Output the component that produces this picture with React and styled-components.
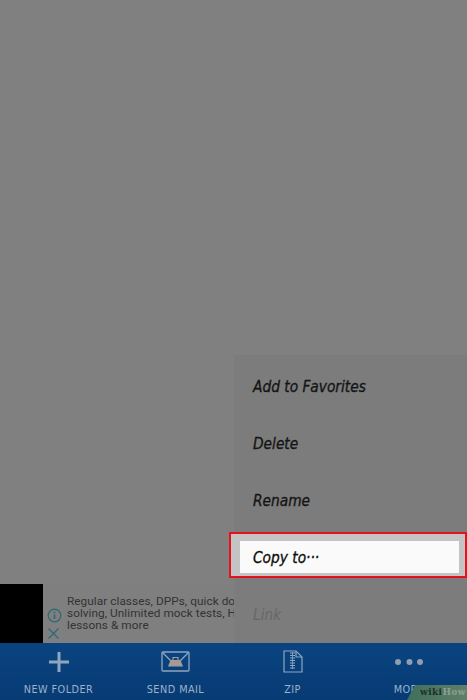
import React from 'react';
import styled, { createGlobalStyle } from 'styled-components';

const Global = createGlobalStyle`
  html, body { margin: 0; padding: 0; background: #7f7f7f; }
  * { box-sizing: border-box; }
`;

const Screen = styled.div`
  position: relative;
  width: 467px;
  height: 700px;
  overflow: hidden;
  display: flex;
  flex-direction: column;
  background: #808080;
  font-family: "Lato", "Liberation Sans", sans-serif;
`;

const Canvas = styled.div`
  flex: 1;
`;

const AdBanner = styled.div`
  height: 59px;
  display: flex;
  background: #7f7f7f;
`;

const AdThumb = styled.div`
  width: 43px;
  background: #000;
`;

const AdControls = styled.div`
  width: 24px;
  padding: 24px 0 0 4px;
  display: flex;
  flex-direction: column;
  align-items: flex-start;
  gap: 4px;
  color: #2f6a75;
`;

const AdText = styled.div`
  width: 167px;
  padding-top: 11px;
  font: 11.8px/12px "Roboto", "Liberation Sans", sans-serif;
  letter-spacing: 0.05px;
  color: #333;
  white-space: nowrap;
  overflow: hidden;
`;

const BottomBar = styled.nav`
  height: 57px;
  display: grid;
  grid-template-columns: 117px 117px 117px 116px;
  background: linear-gradient(#0a4480, #073b74);
`;

const BarButton = styled.div`
  display: flex;
  flex-direction: column;
  align-items: center;
  padding-top: 6px;
  color: #8fa6bf;
`;

const BarIcon = styled.div`
  height: 25px;
  display: flex;
  align-items: center;
  justify-content: center;
`;

const BarLabel = styled.span`
  margin-top: 9px;
  font: 10.8px/13px "DejaVu Sans", sans-serif;
  font-stretch: condensed;
  letter-spacing: 0.45px;
  color: #9db2c9;
  white-space: nowrap;
`;

const Menu = styled.div`
  position: absolute;
  left: 234px;
  top: 355px;
  width: 233px;
  height: 288px;
  padding-top: 4px;
  display: flex;
  flex-direction: column;
  background: #7c7c7c;
`;

const MenuRow = styled.div`
  height: ${p => (p.$disabled ? '56px' : '57px')};
  padding-top: ${p => (p.$disabled ? '1px' : '0')};
  display: flex;
  align-items: center;
  padding-left: 19px;
  font: italic 15.3px/1 "DejaVu Sans", sans-serif;
  font-stretch: condensed;
  -webkit-text-stroke: ${p => (p.$disabled ? '0' : '0.3px')};
  color: ${p => (p.$disabled ? '#676767' : '#141414')};
`;

const HighlightFrame = styled.div`
  height: 46px;
  margin: 2px 0 9px -5px;
  border: 2px solid #e4121c;
  background: #c4c4c4;
  padding: 7px 6px 3px 9px;
  display: flex;
`;

const HighlightRow = styled.div`
  flex: 1;
  display: flex;
  align-items: center;
  padding: 3px 0 0 13px;
  background: #fafafa;
  font: italic 15.3px/1 "DejaVu Sans", sans-serif;
  font-stretch: condensed;
  -webkit-text-stroke: 0.3px;
  color: #0d0d0d;
`;

const Watermark = styled.div`
  position: absolute;
  right: 0;
  bottom: 0;
  width: 60px;
  height: 15px;
  padding-left: 13px;
  background: linear-gradient(90deg, #3f6f5c, #5f7f68);
  clip-path: polygon(8px 0, 100% 0, 100% 100%, 0 100%);
  font: bold 9px/15px "DejaVu Serif", serif;
  letter-spacing: 0.4px;
  color: #20302a;
  white-space: nowrap;
`;

const WatermarkHow = styled.span`
  color: #8d9f93;
`;

const Info = () => (
  <svg width="15" height="15" viewBox="0 0 15 15" fill="none" stroke="currentColor">
    <circle cx="7.5" cy="7.5" r="6.3" strokeWidth="1.3" />
    <path d="M7.5 6.5v4.5" strokeWidth="1.6" />
    <path d="M7.5 3.6v1.6" strokeWidth="1.6" />
  </svg>
);

const Close = () => (
  <svg width="13" height="13" viewBox="0 0 13 13" fill="none" stroke="currentColor" strokeWidth="1.4">
    <path d="M1.5 1.5l10 10M11.5 1.5l-10 10" />
  </svg>
);

const Plus = () => (
  <svg width="20" height="20" viewBox="0 0 20 20" fill="#8fa6bf">
    <rect x="8.5" y="0" width="3" height="20" />
    <rect x="0" y="8.5" width="20" height="3" />
  </svg>
);

const Mail = () => (
  <svg width="29" height="21" viewBox="0 0 29 21" fill="none" stroke="#8fa6bf" strokeWidth="1.3">
    <rect x="1" y="1" width="27" height="19" rx="1" />
    <path d="M1.5 1.5 L10 10 M27.5 1.5 L19 10" />
    <path d="M9.5 9h10l2.5 6.5H7z" fill="#a59a95" stroke="none" />
    <path d="M12 9V6.5h5V9" strokeWidth="1.2" stroke="#a59a95" />
  </svg>
);

const Zip = () => (
  <svg width="20" height="23" viewBox="0 0 20 23" fill="none" stroke="#8fa6bf" strokeWidth="1.2">
    <path d="M1 1h12l6 6v15H1z" />
    <path d="M13 1v6h6" />
    <path d="M7 3h5M7 5.5h5M7 8h5M7 10.5h5M7 13h5M7 15.5h5M7 18h5" strokeWidth="1.1" />
    <path d="M9.5 2v17" strokeWidth="0.8" />
  </svg>
);

const Dots = () => (
  <svg width="30" height="8" viewBox="0 0 30 8" fill="#8f9db0">
    <circle cx="4" cy="4" r="3" />
    <circle cx="15.5" cy="4" r="3" />
    <circle cx="26" cy="4" r="3" />
  </svg>
);

const actions = [
  { label: 'NEW FOLDER', icon: <Plus /> },
  { label: 'SEND MAIL', icon: <Mail /> },
  { label: 'ZIP', icon: <Zip /> },
  { label: 'MORE', icon: <Dots /> },
];

export default function App() {
  return (
    <Screen>
      <Global />
      <Canvas />
      <AdBanner>
        <AdThumb />
        <AdControls>
          <Info />
          <Close />
        </AdControls>
        <AdText>
          Regular classes, DPPs, quick doubt<br />
          solving, Unlimited mock tests, Hindi<br />
          lessons &amp; more
        </AdText>
      </AdBanner>
      <BottomBar>
        {actions.map(a => (
          <BarButton key={a.label}>
            <BarIcon>{a.icon}</BarIcon>
            <BarLabel>{a.label}</BarLabel>
          </BarButton>
        ))}
      </BottomBar>
      <Menu>
        <MenuRow>Add to Favorites</MenuRow>
        <MenuRow>Delete</MenuRow>
        <MenuRow>Rename</MenuRow>
        <HighlightFrame>
          <HighlightRow>Copy to···</HighlightRow>
        </HighlightFrame>
        <MenuRow $disabled>Link</MenuRow>
      </Menu>
      <Watermark>
        wiki<WatermarkHow>How</WatermarkHow>
      </Watermark>
    </Screen>
  );
}
